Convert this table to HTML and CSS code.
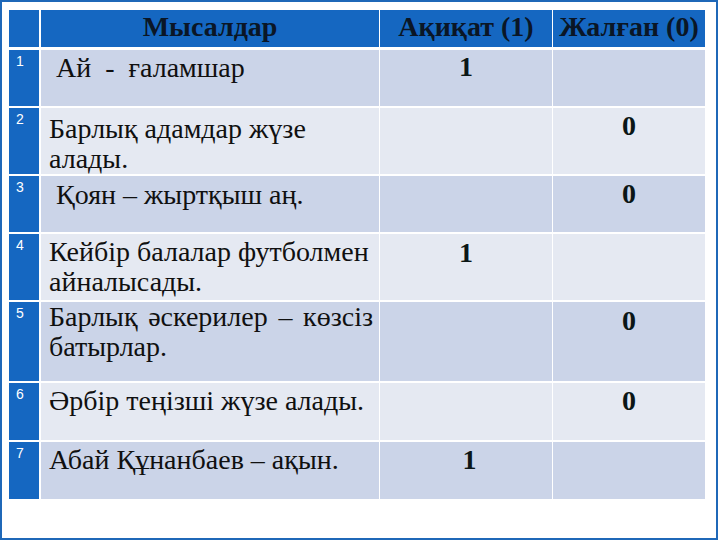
FILE: index.html
```html
<!DOCTYPE html>
<html lang="kk">
<head>
<meta charset="utf-8">
<title>Мысалдар</title>
<link rel="stylesheet" href="styles.css">
</head>
<body>
<div class="frame">
  <table class="truth">
    <colgroup>
      <col class="c-num">
      <col class="c-text">
      <col class="c-true">
      <col class="c-false">
    </colgroup>
    <thead>
      <tr class="head">
        <th class="num"></th>
        <th class="text-h">Мысалдар</th>
        <th class="val-h">Ақиқат (1)</th>
        <th class="val-h last">Жалған (0)</th>
      </tr>
    </thead>
    <tbody>
      <tr class="r1 odd">
        <td class="num">1</td>
        <td class="text">&nbsp;Ай&nbsp; -&nbsp; ғаламшар</td>
        <td class="val">1</td>
        <td class="val last"></td>
      </tr>
      <tr class="r2 even">
        <td class="num">2</td>
        <td class="text">Барлық адамдар жүзе<br>алады.</td>
        <td class="val"></td>
        <td class="val last">0</td>
      </tr>
      <tr class="r3 odd">
        <td class="num">3</td>
        <td class="text">&nbsp;Қоян – жыртқыш аң.</td>
        <td class="val"></td>
        <td class="val last">0</td>
      </tr>
      <tr class="r4 even">
        <td class="num">4</td>
        <td class="text">Кейбір балалар футболмен<br>айналысады.</td>
        <td class="val">1</td>
        <td class="val last"></td>
      </tr>
      <tr class="r5 odd">
        <td class="num">5</td>
        <td class="text justify">Барлық әскерилер – көзсіз батырлар.</td>
        <td class="val"></td>
        <td class="val last">0</td>
      </tr>
      <tr class="r6 even">
        <td class="num">6</td>
        <td class="text">Әрбір теңізші жүзе алады.</td>
        <td class="val"></td>
        <td class="val last">0</td>
      </tr>
      <tr class="r7 odd">
        <td class="num">7</td>
        <td class="text">Абай Құнанбаев – ақын.</td>
        <td class="val">&nbsp;1</td>
        <td class="val last"></td>
      </tr>
    </tbody>
  </table>
</div>
</body>
</html>
```
FILE: styles.css
```css
html, body {
  margin: 0;
  padding: 0;
  background: #ffffff;
}

th, td {
  padding: 0;
}

.frame {
  box-sizing: border-box;
  width: 718px;
  height: 540px;
  border: 2px solid #1f68b8;
  padding: 8px 0 0 7px;
  font-family: "Liberation Serif", "Times New Roman", serif;
}

.truth {
  border-collapse: separate;
  border-spacing: 0;
  table-layout: fixed;
  width: 696px;
}

.c-num { width: 32px; }
.c-text { width: 339px; }
.c-true { width: 173px; }
.c-false { width: 152px; }

.truth th,
.truth td {
  box-sizing: border-box;
  vertical-align: top;
  border-right: 1px solid #ffffff;
  border-bottom: 2px solid #ffffff;
}

.truth .last { border-right: 0; }
.truth .num { border-right: 2px solid #ffffff; }
.truth tbody tr:last-child td { border-bottom: 0; }

/* header */
.head { height: 40px; }
.truth .head th {
  background: #1567c1;
  color: #0a1626;
  font-family: "Liberation Serif", "Times New Roman", serif;
  font-weight: bold;
  font-size: 28px;
  line-height: 28px;
  text-align: center;
  padding-top: 3px;
  border-bottom: 3px solid #ffffff;
  white-space: nowrap;
}

/* row number column */
.num {
  background: #1567c1;
  color: #ffffff;
  font-family: "Liberation Sans", Arial, sans-serif;
  font-size: 14px;
  line-height: 16px;
  padding: 3px 0 0 7px;
}

.odd td { background: #cbd4e8; }
.even td { background: #e5e9f2; }
.odd td.num,
.even td.num { background: #1567c1; }

/* statement column */
.text {
  color: #101010;
  font-family: "Liberation Serif", "Times New Roman", serif;
  font-size: 28px;
  line-height: 30px;
  padding: 3px 0 0 8px;
  white-space: nowrap;
}
.justify {
  white-space: normal;
  text-align: justify;
  padding-right: 6px;
}

/* value columns */
.val {
  color: #0b1616;
  font-family: "Liberation Serif", "Times New Roman", serif;
  font-weight: bold;
  font-size: 28px;
  line-height: 28px;
  text-align: center;
  padding-top: 4px;
}

/* row heights and per-row text offsets */
.r1 { height: 58px; }
.r2 { height: 68px; }
.r3 { height: 58px; }
.r4 { height: 68px; }
.r5 { height: 81px; }
.r6 { height: 59px; }
.r7 { height: 57px; }

.r1 .text { padding-top: 3px; }
.r2 .text { padding-top: 6px; }
.r3 .text { padding-top: 4px; }
.r4 .text { padding-top: 3px; }
.r5 .text { padding-top: 0; }
.r6 .text { padding-top: 3px; }
.r7 .text { padding-top: 3px; }
.r1 .val { padding-top: 3px; }
.r4 .val,
.r5 .val { padding-top: 5px; }
```
